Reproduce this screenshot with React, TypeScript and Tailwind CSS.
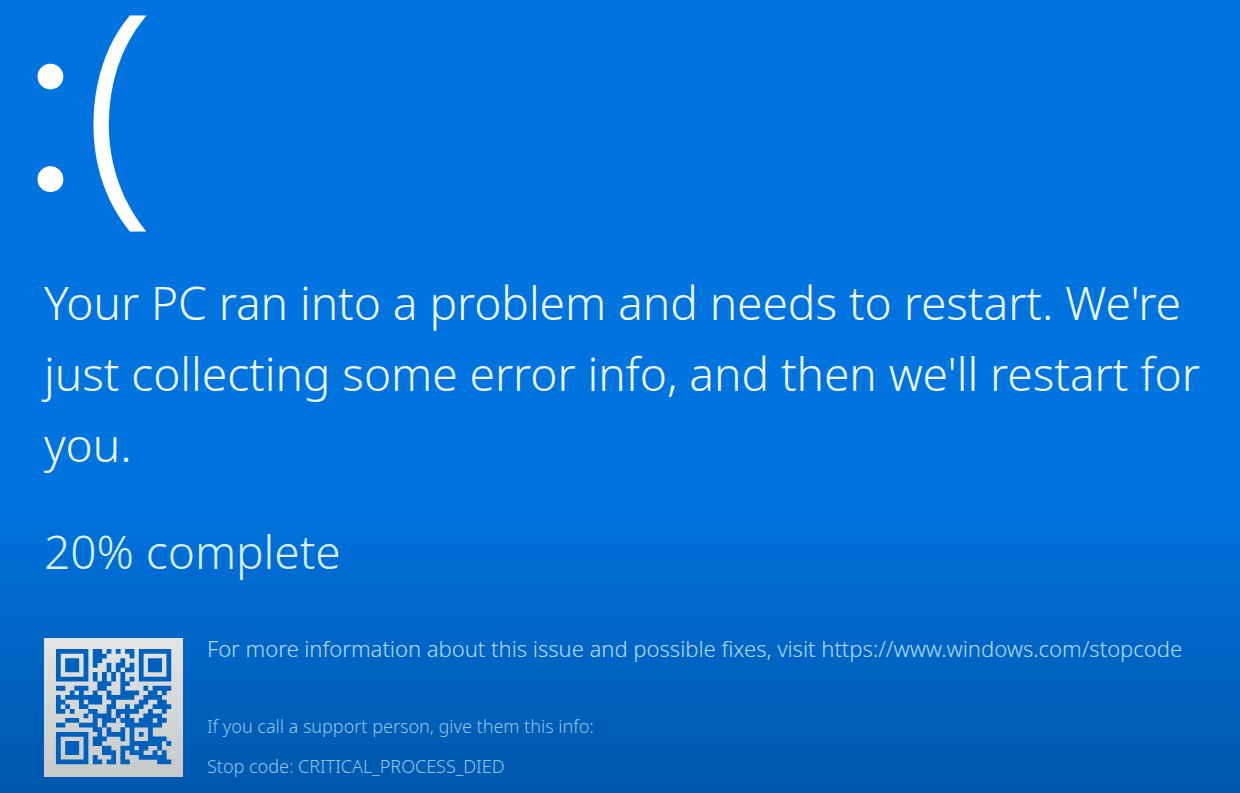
import React from "react";

const STOP_URL = "https://www.windows.com/stopcode";
const PERCENT = 20;

// QR version 2, error correction L, mask 4
const SIZE = 25;
const EC_LENGTH = 10;
const FORMAT_BITS = "110011000101111";

const gfMul = (a: number, b: number) => {
  let result = 0;
  for (let i = 7; i >= 0; i--) {
    result = (result << 1) ^ ((result >> 7) * 0x11d);
    if ((b >> i) & 1) result ^= a;
  }
  return result;
};

const errorCorrection = (data: number[]) => {
  const divisor: number[] = new Array(EC_LENGTH).fill(0);
  divisor[EC_LENGTH - 1] = 1;
  let root = 1;
  for (let i = 0; i < EC_LENGTH; i++) {
    for (let j = 0; j < EC_LENGTH; j++) {
      divisor[j] = gfMul(divisor[j], root) ^ (divisor[j + 1] ?? 0);
    }
    root = gfMul(root, 2);
  }

  const rest: number[] = new Array(EC_LENGTH).fill(0);
  data.forEach((byte) => {
    const factor = byte ^ rest.shift()!;
    rest.push(0);
    divisor.forEach((d, i) => {
      rest[i] ^= gfMul(d, factor);
    });
  });
  return rest;
};

const buildCode = (text: string) => {
  const toBits = (value: number, length: number) =>
    value.toString(2).padStart(length, "0");

  // byte mode, length, payload, terminator: fills all 34 data bytes
  const payload = Array.from(text, (c) => toBits(c.charCodeAt(0), 8)).join("");
  const stream = "0100" + toBits(text.length, 8) + payload + "0000";
  const data = stream.match(/.{8}/g)!.map((b) => parseInt(b, 2));
  const bits = [...data, ...errorCorrection(data)]
    .map((b) => toBits(b, 8))
    .join("");

  const grid: (boolean | null)[][] = Array.from({ length: SIZE }, () =>
    new Array(SIZE).fill(null)
  );

  // Timing lines
  for (let i = 0; i < SIZE; i++) {
    grid[6][i] = i % 2 === 0;
    grid[i][6] = i % 2 === 0;
  }

  // Finder patterns with their quiet border
  const finders = [
    [3, 3],
    [3, SIZE - 4],
    [SIZE - 4, 3],
  ];
  finders.forEach(([row, col]) => {
    for (let y = -4; y <= 4; y++) {
      for (let x = -4; x <= 4; x++) {
        const ring = Math.max(Math.abs(x), Math.abs(y));
        if (grid[row + y]?.[col + x] !== undefined) {
          grid[row + y][col + x] = ring !== 2 && ring !== 4;
        }
      }
    }
  });

  // Alignment pattern
  for (let y = -2; y <= 2; y++) {
    for (let x = -2; x <= 2; x++) {
      grid[18 + y][18 + x] = Math.max(Math.abs(x), Math.abs(y)) !== 1;
    }
  }

  // Format info, written twice
  const line = [0, 1, 2, 3, 4, 5, 7, 8];
  for (let i = 0; i < 15; i++) {
    const on = FORMAT_BITS[i] === "1";
    if (i < 8) grid[8][line[i]] = on;
    else grid[line[14 - i]][8] = on;
    if (i < 7) grid[SIZE - 1 - i][8] = on;
    else grid[8][SIZE - 15 + i] = on;
  }
  grid[SIZE - 8][8] = true;

  // Zigzag the data up and down in pairs of columns
  let next = 0;
  for (let right = SIZE - 1; right >= 1; right -= 2) {
    if (right === 6) right = 5;
    const upward = ((right + 1) & 2) === 0;
    for (let step = 0; step < SIZE; step++) {
      const row = upward ? SIZE - 1 - step : step;
      for (const col of [right, right - 1]) {
        if (grid[row][col] !== null) continue;
        const flip = (Math.floor(row / 2) + Math.floor(col / 3)) % 2 === 0;
        grid[row][col] = (bits[next++] === "1") !== flip;
      }
    }
  }
  return grid;
};

const modules = buildCode(STOP_URL);

const QRCode: React.FC = () => (
  <svg
    viewBox="-2.6 -2.4 30.2 30.2"
    className="h-[139px] w-[139px] shrink-0 bg-linear-to-b from-[#e3e5e4] to-[#c6cacb]"
    role="img"
    aria-label={STOP_URL}
  >
    <path
      className="fill-[#0061bd]"
      d={modules
        .flatMap((row, y) =>
          row.map((on, x) => (on ? `M${x} ${y}h1.04v1.04h-1.04z` : ""))
        )
        .join("")}
    />
  </svg>
);

export default function App() {
  return (
    <main className="min-h-screen bg-linear-to-b from-[#0073df] from-62% to-[#0057aa] pr-8 pb-4 pl-11 font-['Noto_Sans','Open_Sans',sans-serif] font-light text-white">
      <h1 className="-ml-7 h-[267px] font-['Open_Sans',sans-serif] text-[244px] leading-[192px] font-light">
        <span className="font-['Inter',sans-serif]">:</span>
        <span className="[-webkit-text-stroke:3px_white]">(</span>
      </h1>

      <p className="text-[46px] leading-[71px] text-[#ecf8ff]">
        Your PC ran into a problem and needs to restart. We're just collecting
        some error info, and then we'll restart for you.
      </p>
      <p className="mt-9 text-[46px] leading-[71px] text-[#d8effd]">
        {PERCENT}% complete
      </p>

      <div className="mt-[51px] flex gap-6">
        <QRCode />
        <div className="text-[#8fc4ee]">
          <p className="text-[22px] leading-5 text-[#b4dbf8]">
            For more information about this issue and possible fixes, visit{" "}
            {STOP_URL}
          </p>
          <p className="mt-12 text-lg leading-10">
            If you call a support person, give them this info:
          </p>
          <p className="text-lg leading-10">Stop code: CRITICAL_PROCESS_DIED</p>
        </div>
      </div>
    </main>
  );
}
